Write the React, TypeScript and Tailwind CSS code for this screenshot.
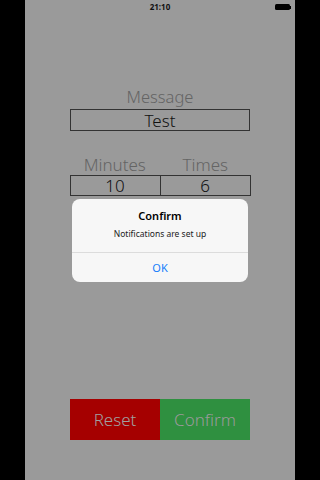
import React from "react";

export default function App() {
  const font = { fontFamily: '"Noto Sans", "Liberation Sans", sans-serif' };
  return (
    <div className="w-[320px] h-[480px] bg-black flex justify-center" style={font}>
      <div className="relative w-[270px] h-[480px] bg-[#9a9a9a] flex flex-col">
        {/* status bar */}
        <div className="h-[14px] relative flex items-center justify-center">
          <span className="text-[8px] font-bold text-[#111] leading-none">21:10</span>
          <div className="absolute right-[4px] top-[4px] flex items-center">
            <div className="w-[15px] h-[6px] rounded-[1.5px] bg-black" />
            <div className="w-[1px] h-[3px] bg-black" />
          </div>
        </div>

        {/* Message */}
        <div className="mt-[74px] flex flex-col items-center">
          <div className="h-[21px] text-[16.5px] leading-[18px] font-light text-[#646464]">Message</div>
          <div className="w-[180px] h-[22px] border border-[#333] flex items-center justify-center text-[17px] font-light text-[#111] leading-none">
            Test
          </div>
        </div>

        {/* Minutes / Times */}
        <div className="mt-[24px] flex flex-col items-center">
          <div className="w-[181px] flex">
            <div className="flex-1 text-center h-[20px] text-[17px] leading-[19px] font-light text-[#646464]">Minutes</div>
            <div className="flex-1 text-center h-[20px] text-[17px] leading-[19px] font-light text-[#646464]">Times</div>
          </div>
          <div className="w-[181px] h-[21px] border border-[#333] flex">
            <div className="flex-1 border-r border-[#333] flex items-center justify-center text-[17px] font-light text-[#111] leading-none">10</div>
            <div className="flex-1 flex items-center justify-center text-[17px] font-light text-[#111] leading-none">6</div>
          </div>
        </div>

        <div className="flex-1" />

        {/* Buttons */}
        <div className="mb-[40px] flex justify-center">
          <div className="w-[90px] h-[41px] bg-[#a50000] flex items-center justify-center text-[17px] font-light text-[#a0a0a0]">Reset</div>
          <div className="w-[90px] h-[41px] bg-[#2f9040] flex items-center justify-center text-[17px] font-light text-[#9a9a9a]">Confirm</div>
        </div>

        {/* Alert */}
        <div className="absolute left-[47px] top-[199px] w-[176px] h-[83px] bg-[#f7f7f7] rounded-[8px] flex flex-col">
          <div className="h-[53px] flex flex-col items-center pt-[10px]">
            <div className="text-[11px] font-semibold text-black leading-[14px]">Confirm</div>
            <div className="mt-[5px] text-[8.5px] text-[#222] leading-[11px]">Notifications are set up</div>
          </div>
          <div className="h-px bg-[#dcdcdc]" />
          <div className="flex-1 flex items-center justify-center text-[11px] text-[#157efb] leading-none">OK</div>
        </div>
      </div>
    </div>
  );
}
